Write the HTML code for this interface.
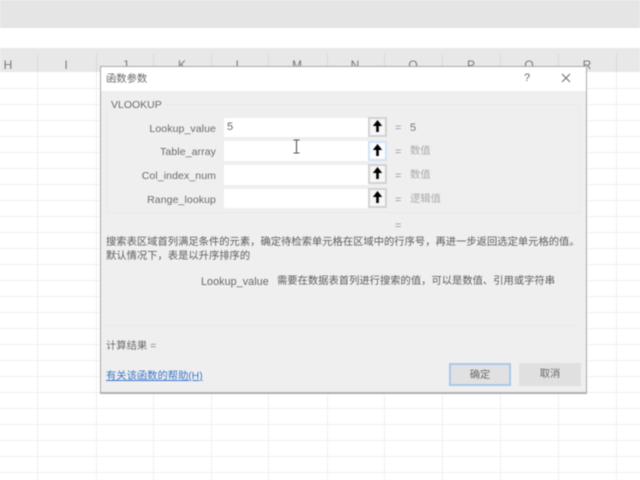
<!DOCTYPE html>
<html>
<head>
<meta charset="utf-8">
<style>
html,body{margin:0;padding:0;width:640px;height:480px;overflow:hidden;background:#fff}
#wrap{position:relative;width:640px;height:480px;overflow:hidden;background:#fff;filter:blur(0.55px);font-family:"Liberation Sans","Noto Sans CJK SC",sans-serif;color:#555}
.a{position:absolute;white-space:nowrap}
.h{position:absolute;left:0;width:640px;height:1px;background:#f0f0f0}
.v{position:absolute;top:72px;height:408px;width:1px;background:#f0f0f0}
.hv{position:absolute;top:54px;height:18px;width:1px;background:#d8d8d8}
.col{position:absolute;top:57px;width:40px;text-align:center;font-size:12px;color:#777;line-height:16px}
.lbl{position:absolute;right:424px;font-size:10.5px;line-height:14px;color:#6a6a6a;white-space:nowrap;letter-spacing:.1px}
.inp{position:absolute;left:224px;width:144px;height:19px;background:#fff}
.btn{position:absolute;left:368px;width:19px;height:20px;box-sizing:border-box;border:2px solid #d3d3d3;background:#f6f6f6}
.btn svg{position:absolute;left:0px;top:0px}
.eq{position:absolute;left:395px;font-size:11px;line-height:14px;color:#999}
.val{position:absolute;left:410px;font-size:10.3px;line-height:14px;color:#aaa;white-space:nowrap}
.t{position:absolute;font-size:10.3px;line-height:14px;white-space:nowrap;color:#5c5c5c}
.b{position:absolute;top:363px;width:62px;height:23px;box-sizing:border-box;background:#e1e1e1;text-align:center;font-size:10.3px;line-height:23px;color:#6a6a6a}
</style>
</head>
<body>
<div id="wrap">
<div class="a" style="left:0;top:0;width:640px;height:28px;background:#e5e5e5"></div>
<div class="a" style="left:0;top:48px;width:640px;height:24px;background:#e8e8e8"></div>
<div class="hv" style="left:37px"></div><div class="hv" style="left:96px"></div><div class="hv" style="left:153px"></div><div class="hv" style="left:211px"></div><div class="hv" style="left:268px"></div><div class="hv" style="left:327px"></div><div class="hv" style="left:384px"></div><div class="hv" style="left:442px"></div><div class="hv" style="left:500px"></div><div class="hv" style="left:558px"></div><div class="hv" style="left:616px"></div>
<div class="col" style="left:-12px">H</div>
<div class="col" style="left:46px">I</div>
<div class="col" style="left:105px">J</div>
<div class="col" style="left:162px">K</div>
<div class="col" style="left:219px">L</div>
<div class="col" style="left:277px">M</div>
<div class="col" style="left:335px">N</div>
<div class="col" style="left:393px">O</div>
<div class="col" style="left:451px">P</div>
<div class="col" style="left:509px">Q</div>
<div class="col" style="left:567px">R</div>

<div class="h" style="top:88px"></div><div class="h" style="top:104px"></div><div class="h" style="top:120px"></div><div class="h" style="top:136px"></div><div class="h" style="top:152px"></div><div class="h" style="top:168px"></div><div class="h" style="top:184px"></div><div class="h" style="top:200px"></div><div class="h" style="top:216px"></div><div class="h" style="top:232px"></div><div class="h" style="top:248px"></div><div class="h" style="top:264px"></div><div class="h" style="top:280px"></div><div class="h" style="top:296px"></div><div class="h" style="top:312px"></div><div class="h" style="top:328px"></div><div class="h" style="top:344px"></div><div class="h" style="top:360px"></div><div class="h" style="top:376px"></div><div class="h" style="top:392px"></div><div class="h" style="top:408px"></div><div class="h" style="top:424px"></div><div class="h" style="top:440px"></div><div class="h" style="top:456px"></div><div class="h" style="top:472px"></div>
<div class="v" style="left:37px"></div><div class="v" style="left:96px"></div><div class="v" style="left:153px"></div><div class="v" style="left:211px"></div><div class="v" style="left:268px"></div><div class="v" style="left:327px"></div><div class="v" style="left:384px"></div><div class="v" style="left:442px"></div><div class="v" style="left:500px"></div><div class="v" style="left:558px"></div><div class="v" style="left:616px"></div>

<!-- dialog -->
<div class="a" style="left:100px;top:66px;width:487px;height:328px;box-sizing:border-box;border:1px solid #a8a8a8;border-bottom:2px solid #b0b0b0;background:#efefef"></div>
<div class="a" style="left:101px;top:67px;width:485px;height:24px;background:#fff"></div>
<div class="t" style="left:106px;top:73px;color:#6a6a6a">函数参数</div>
<div class="t" style="left:524px;top:71px;font-size:11px;color:#666">?</div>
<svg class="a" style="left:561px;top:73px" width="10" height="10"><path d="M1 1L9 9M9 1L1 9" stroke="#666" stroke-width="0.9" fill="none"/></svg>

<div class="a" style="left:106px;top:104px;width:474px;height:109px;box-sizing:border-box;border:1px solid #e9e9e9"></div>
<div class="a" style="left:108px;top:98px;padding:0 3px;background:#efefef;font-size:10.5px;line-height:14px;color:#6a6a6a">VLOOKUP</div>

<div class="lbl" style="top:122px">Lookup_value</div>
<div class="lbl" style="top:145px">Table_array</div>
<div class="lbl" style="top:169px">Col_index_num</div>
<div class="lbl" style="top:193px">Range_lookup</div>

<div class="inp" style="top:118px"></div>
<div class="inp" style="top:141px;height:20px"></div>
<div class="inp" style="top:165px;height:20px"></div>
<div class="inp" style="top:189px"></div>
<div class="a" style="left:227px;top:120px;font-size:11px;line-height:14px;color:#666">5</div>

<div class="btn" style="top:117px"><svg width="15" height="16"><path d="M7.5 1L2.8 7H6.2V13H8.8V7H12.2Z" fill="#000"/></svg></div>
<div class="btn" style="top:141px;border-color:#cfe3f7;background:#fafcff"><svg width="15" height="16"><path d="M7.5 1L2.8 7H6.2V13H8.8V7H12.2Z" fill="#000"/></svg></div>
<div class="btn" style="top:164px"><svg width="15" height="16"><path d="M7.5 1L2.8 7H6.2V13H8.8V7H12.2Z" fill="#000"/></svg></div>
<div class="btn" style="top:188px"><svg width="15" height="16"><path d="M7.5 1L2.8 7H6.2V13H8.8V7H12.2Z" fill="#000"/></svg></div>

<div class="eq" style="top:121px">=</div><div class="eq" style="top:145px">=</div><div class="eq" style="top:169px">=</div><div class="eq" style="top:193px">=</div><div class="eq" style="top:219px">=</div>
<div class="val" style="top:121px;color:#777;font-size:11px">5</div>
<div class="val" style="top:145px">数值</div>
<div class="val" style="top:169px">数值</div>
<div class="val" style="top:193px">逻辑值</div>

<svg class="a" style="left:292px;top:139px" width="9" height="15"><path d="M1.5 1H7.5M1.5 14H7.5M4.5 1V14" stroke="#555" stroke-width="1.1" fill="none"/></svg>

<div class="t" style="left:106px;top:236px;width:475px">搜索表区域首列满足条件的元素，确定待检索单元格在区域中的行序号，再进一步返回选定单元格的值。</div>
<div class="t" style="left:106px;top:250px">默认情况下，表是以升序排序的</div>
<div class="t" style="left:201px;top:275px;font-size:10.7px;letter-spacing:.1px;color:#666">Lookup_value</div>
<div class="t" style="left:277px;top:275px">需要在数据表首列进行搜索的值，可以是数值、引用或字符串</div>

<div class="a" style="left:106px;top:325px;width:474px;height:1px;background:#e8e8e8"></div>
<div class="t" style="left:106px;top:340px;color:#6a6a6a">计算结果 <span style="color:#888">=</span></div>
<div class="t" style="left:106px;top:370px;color:#3c78c8;text-decoration:underline">有关该函数的帮助(H)</div>

<div class="b" style="left:449px;border:2px solid #a9c8ea;line-height:21px">确定</div>
<div class="b" style="left:519px;background:#e0e0e0">取消</div>
</div>
</body>
</html>
